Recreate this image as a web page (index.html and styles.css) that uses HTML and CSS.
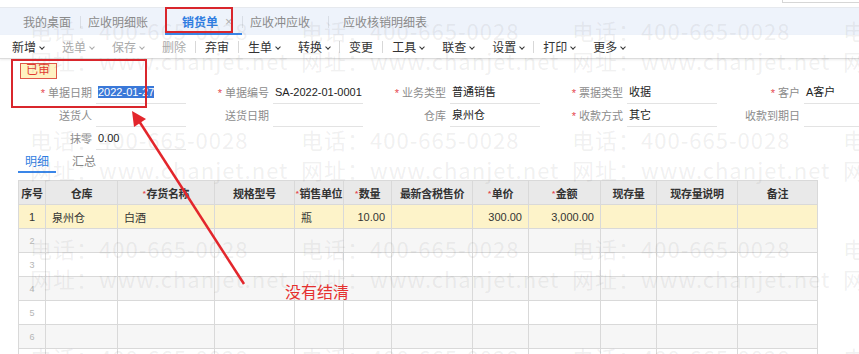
FILE: index.html
```html
<!DOCTYPE html>
<html>
  <head>
    <meta charset="UTF-8">
    <title>销货单</title>
    <link rel="stylesheet" href="styles.css">
  </head>
  <body>
    <div class="page">
      <div class="topbar"><div class="search"></div></div>

      <div class="tabs">
        <div class="tab tab-home">我的桌面</div>
        <div class="tab tab-detail">应收明细账</div>
        <div class="tab tab-active">销货单<span class="close">×</span></div>
        <div class="tab tab-offset">应收冲应收</div>
        <div class="tab tab-verify">应收核销明细表</div>
      </div>

      <div class="toolbar">
        <span class="tool dd">新增</span>
        <span class="tool dd off">选单</span>
        <span class="tool dd off">保存</span>
        <span class="tool off">删除</span>
        <span class="sep"></span>
        <span class="tool">弃审</span>
        <span class="sep"></span>
        <span class="tool dd">生单</span>
        <span class="tool dd">转换</span>
        <span class="sep"></span>
        <span class="tool">变更</span>
        <span class="sep"></span>
        <span class="tool dd">工具</span>
        <span class="tool dd">联查</span>
        <span class="tool dd">设置</span>
        <span class="sep"></span>
        <span class="tool dd">打印</span>
        <span class="tool dd">更多</span>
      </div>

      <div class="form">
        <div class="status">已审</div>
        <div class="row">
          <div class="field"><label><i>*</i> 单据日期</label><div class="input"><span class="selected">2022-01-27</span></div></div>
          <div class="field"><label><i>*</i> 单据编号</label><div class="input">SA-2022-01-0001</div></div>
          <div class="field"><label><i>*</i> 业务类型</label><div class="input">普通销售</div></div>
          <div class="field"><label><i>*</i> 票据类型</label><div class="input">收据</div></div>
          <div class="field"><label><i>*</i> 客户</label><div class="input">A客户</div></div>
        </div>
        <div class="row">
          <div class="field"><label>送货人</label><div class="input"></div></div>
          <div class="field"><label>送货日期</label><div class="input"></div></div>
          <div class="field"><label>仓库</label><div class="input">泉州仓</div></div>
          <div class="field"><label><i>*</i> 收款方式</label><div class="input">其它</div></div>
          <div class="field"><label>收款到期日</label><div class="input"></div></div>
        </div>
        <div class="row">
          <div class="field"><label>抹零</label><div class="input">0.00</div></div>
        </div>
      </div>

      <div class="subtabs">
        <span class="subtab active">明细</span>
        <span class="subtab">汇总</span>
      </div>

      <table class="grid">
        <colgroup>
          <col style="width:27px"><col style="width:72px"><col style="width:97px"><col style="width:80px">
          <col style="width:49px"><col style="width:48px"><col style="width:81px"><col style="width:56px">
          <col style="width:72px"><col style="width:56px"><col style="width:81px"><col style="width:80px">
        </colgroup>
        <thead>
          <tr>
            <th>序号</th>
            <th>仓库</th>
            <th><i>*</i>存货名称</th>
            <th>规格型号</th>
            <th><i>*</i>销售单位</th>
            <th><i>*</i>数量</th>
            <th>最新含税售价</th>
            <th><i>*</i>单价</th>
            <th><i>*</i>金额</th>
            <th>现存量</th>
            <th>现存量说明</th>
            <th>备注</th>
          </tr>
        </thead>
        <tbody>
          <tr class="current">
            <td class="num">1</td><td>泉州仓</td><td>白酒</td><td></td><td>瓶</td>
            <td class="amt">10.00</td><td></td><td class="amt">300.00</td><td class="amt">3,000.00</td>
            <td></td><td></td><td></td>
          </tr>
          <tr><td class="num small">2</td><td></td><td></td><td></td><td></td><td></td><td></td><td></td><td></td><td></td><td></td><td></td></tr>
          <tr><td class="num small">3</td><td></td><td></td><td></td><td></td><td></td><td></td><td></td><td></td><td></td><td></td><td></td></tr>
          <tr><td class="num small">4</td><td></td><td></td><td></td><td></td><td></td><td></td><td></td><td></td><td></td><td></td><td></td></tr>
          <tr><td class="num small">5</td><td></td><td></td><td></td><td></td><td></td><td></td><td></td><td></td><td></td><td></td><td></td></tr>
          <tr><td class="num small">6</td><td></td><td></td><td></td><td></td><td></td><td></td><td></td><td></td><td></td><td></td><td></td></tr>
          <tr><td class="num small">7</td><td></td><td></td><td></td><td></td><td></td><td></td><td></td><td></td><td></td><td></td><td></td></tr>
        </tbody>
      </table>

      <!-- watermark -->
      <div class="watermark">
        <div class="wm-row">
          <div class="wm"><p>电话：400-665-0028</p><p>网址：www.chanjet.net</p></div>
          <div class="wm"><p>电话：400-665-0028</p><p>网址：www.chanjet.net</p></div>
          <div class="wm"><p>电话：400-665-0028</p><p>网址：www.chanjet.net</p></div>
          <div class="wm"><p>电话：400-665-0028</p><p>网址：www.chanjet.net</p></div>
        </div>
        <div class="wm-row">
          <div class="wm"><p>电话：400-665-0028</p><p>网址：www.chanjet.net</p></div>
          <div class="wm"><p>电话：400-665-0028</p><p>网址：www.chanjet.net</p></div>
          <div class="wm"><p>电话：400-665-0028</p><p>网址：www.chanjet.net</p></div>
          <div class="wm"><p>电话：400-665-0028</p><p>网址：www.chanjet.net</p></div>
        </div>
        <div class="wm-row">
          <div class="wm"><p>电话：400-665-0028</p><p>网址：www.chanjet.net</p></div>
          <div class="wm"><p>电话：400-665-0028</p><p>网址：www.chanjet.net</p></div>
          <div class="wm"><p>电话：400-665-0028</p><p>网址：www.chanjet.net</p></div>
          <div class="wm"><p>电话：400-665-0028</p><p>网址：www.chanjet.net</p></div>
        </div>
        <div class="wm-row">
          <div class="wm"><p>电话：400-665-0028</p><p>网址：www.chanjet.net</p></div>
          <div class="wm"><p>电话：400-665-0028</p><p>网址：www.chanjet.net</p></div>
          <div class="wm"><p>电话：400-665-0028</p><p>网址：www.chanjet.net</p></div>
          <div class="wm"><p>电话：400-665-0028</p><p>网址：www.chanjet.net</p></div>
        </div>
      </div>

      <!-- annotations -->
      <div class="mark mark-tab"></div>
      <div class="mark mark-date"></div>
      <svg class="arrow" width="859" height="354" viewBox="0 0 859 354">
        <line x1="244" y1="284" x2="139" y2="121" stroke="#e3262c" stroke-width="2.5"/>
        <polygon points="132,111 134,127 146,119" fill="#e3262c"/>
      </svg>
      <div class="note">没有结清</div>
    </div>
  </body>
</html>
```

FILE: styles.css
```css
body {
  margin: 0;
  font-family: "Liberation Sans", "Noto Sans CJK SC", sans-serif;
  font-size: 12px;
  color: #333;
  background: #fff;
}
.page {
  position: relative;
  width: 859px;
  height: 354px;
  overflow: hidden;
}

/* top */
.topbar {
  height: 7px;
  border-bottom: 1px solid #e6e9ee;
  display: flex;
  justify-content: flex-end;
}
.search {
  width: 76px;
  height: 2px;
  border: 1px solid #d6d6d6;
  border-top: none;
  border-right: none;
}
.tabs {
  display: flex;
  height: 27px;
  background: #eef3fb;
}
.tab {
  position: relative;
  display: flex;
  align-items: center;
  box-sizing: border-box;
  color: #8a8a8a;
  white-space: nowrap;
}
.tab + .tab::before {
  content: "";
  position: absolute;
  left: 0;
  top: 8px;
  width: 1px;
  height: 12px;
  background: #d9dee6;
}
.tab-home { width: 80px; padding-left: 23px; }
.tab-detail { width: 85px; padding-left: 8px; }
.tab-active { width: 77px; padding-left: 17px; color: #2f7de1; font-weight: bold; }
.tab-offset { width: 86px; padding-left: 8px; }
.tab-verify { padding-left: 15px; }
.tab-active::after {
  content: "";
  position: absolute;
  left: 0;
  right: 0;
  bottom: 0;
  height: 2px;
  background: #3a86e8;
}
.close {
  margin-left: 7px;
  color: #b0b0b0;
  font-weight: normal;
  font-size: 13px;
}

.toolbar {
  display: flex;
  align-items: center;
  height: 23px;
  padding-left: 3px;
  border-bottom: 1px solid #dcdcdc;
  box-shadow: 0 1px 2px rgba(0, 0, 0, 0.08);
}
.tool {
  padding: 0 9px;
  white-space: nowrap;
  color: #333;
}
.tool.off {
  color: #aaa;
}
.tool.dd::after {
  content: "";
  display: inline-block;
  width: 3px;
  height: 3px;
  margin-left: 4px;
  border-right: 1.5px solid currentColor;
  border-bottom: 1.5px solid currentColor;
  transform: rotate(45deg);
  vertical-align: 3px;
}
.sep {
  width: 1px;
  height: 12px;
  background: #d8d8d8;
}

/* header form */
.form {
  padding-top: 4px;
  font-size: 11px;
}
.status {
  margin: 0 0 3px 20px;
  width: 37px;
  height: 16px;
  box-sizing: border-box;
  border: 1.5px solid #e0574a;
  background: #fff2c2;
  color: #e23a32;
  font-size: 12px;
  line-height: 13px;
  padding-left: 5px;
}
.row {
  display: flex;
  padding-left: 10px;
  margin-bottom: 1px;
}
.field {
  display: flex;
  width: 177px;
  flex-shrink: 0;
  height: 22px;
}
.field label {
  width: 82px;
  text-align: right;
  line-height: 22px;
  color: #8c8c8c;
  white-space: nowrap;
}
.field label i, .grid th i {
  font-style: normal;
  color: #e5484d;
}
.field .input {
  width: 90px;
  flex-shrink: 0;
  margin-left: 4px;
  box-sizing: border-box;
  padding-left: 2px;
  line-height: 21px;
  border-bottom: 1px solid #e3e3e3;
  color: #222;
  white-space: nowrap;
  overflow: hidden;
}
.selected {
  background: #3a78d8;
  color: #fff;
}

/* detail grid */
.subtabs {
  display: flex;
  height: 22px;
  padding-left: 18px;
}
.subtab {
  padding: 0 7px;
  line-height: 20px;
  margin-top: 1px;
  color: #888;
}
.subtab.active {
  color: #2f7de1;
  border-bottom: 2px solid #3a86e8;
  height: 19px;
}
.subtab + .subtab {
  margin-left: 9px;
}
.grid {
  margin: 7px 0 0 18px;
  width: 799px;
  table-layout: fixed;
  border-collapse: collapse;
  font-size: 11px;
}
.grid th, .grid td {
  height: 23px;
  padding: 0 6px;
  border: 1px solid #d9d9d9;
  white-space: nowrap;
  overflow: hidden;
}
.grid th {
  padding: 0;
  background: #e9e9e9;
  font-weight: bold;
  color: #333;
  text-align: center;
  letter-spacing: -0.3px;
}
.grid th i {
  font-size: 8px;
  vertical-align: 2px;
  margin-right: 1px;
}
.grid tbody tr:nth-child(even) {
  background: #f6f6f6;
}
.grid tbody tr.current {
  background: #fdf3c9;
}
.grid td.num {
  padding: 0;
  text-align: center;
}
.grid td.small {
  font-size: 9px;
  color: #b5b5b5;
}
.grid td.amt {
  text-align: right;
}

/* watermark over the whole page */
.watermark {
  position: absolute;
  left: 0;
  top: 0;
  padding: 17px 0 0 30px;
  pointer-events: none;
  font-family: "Noto Sans CJK SC", sans-serif;
  font-size: 22px;
  color: rgba(110, 110, 110, 0.1);
  white-space: nowrap;
}
.wm-row {
  display: flex;
  height: 109px;
}
.wm {
  width: 271px;
  flex-shrink: 0;
}
.wm p {
  margin: 0 0 4px;
  line-height: 26px;
  letter-spacing: 1px;
}

/* red annotations */
.mark {
  position: absolute;
  border: 2px solid #d9262c;
  box-sizing: border-box;
}
.mark-tab {
  left: 165px;
  top: 7px;
  width: 68px;
  height: 26px;
}
.mark-date {
  left: 11px;
  top: 59px;
  width: 136px;
  height: 49px;
}
.arrow {
  position: absolute;
  left: 0;
  top: 0;
}
.note {
  position: absolute;
  left: 285px;
  top: 279px;
  font-size: 16px;
  color: #e5302f;
  font-family: "Noto Sans CJK SC", sans-serif;
}
```
